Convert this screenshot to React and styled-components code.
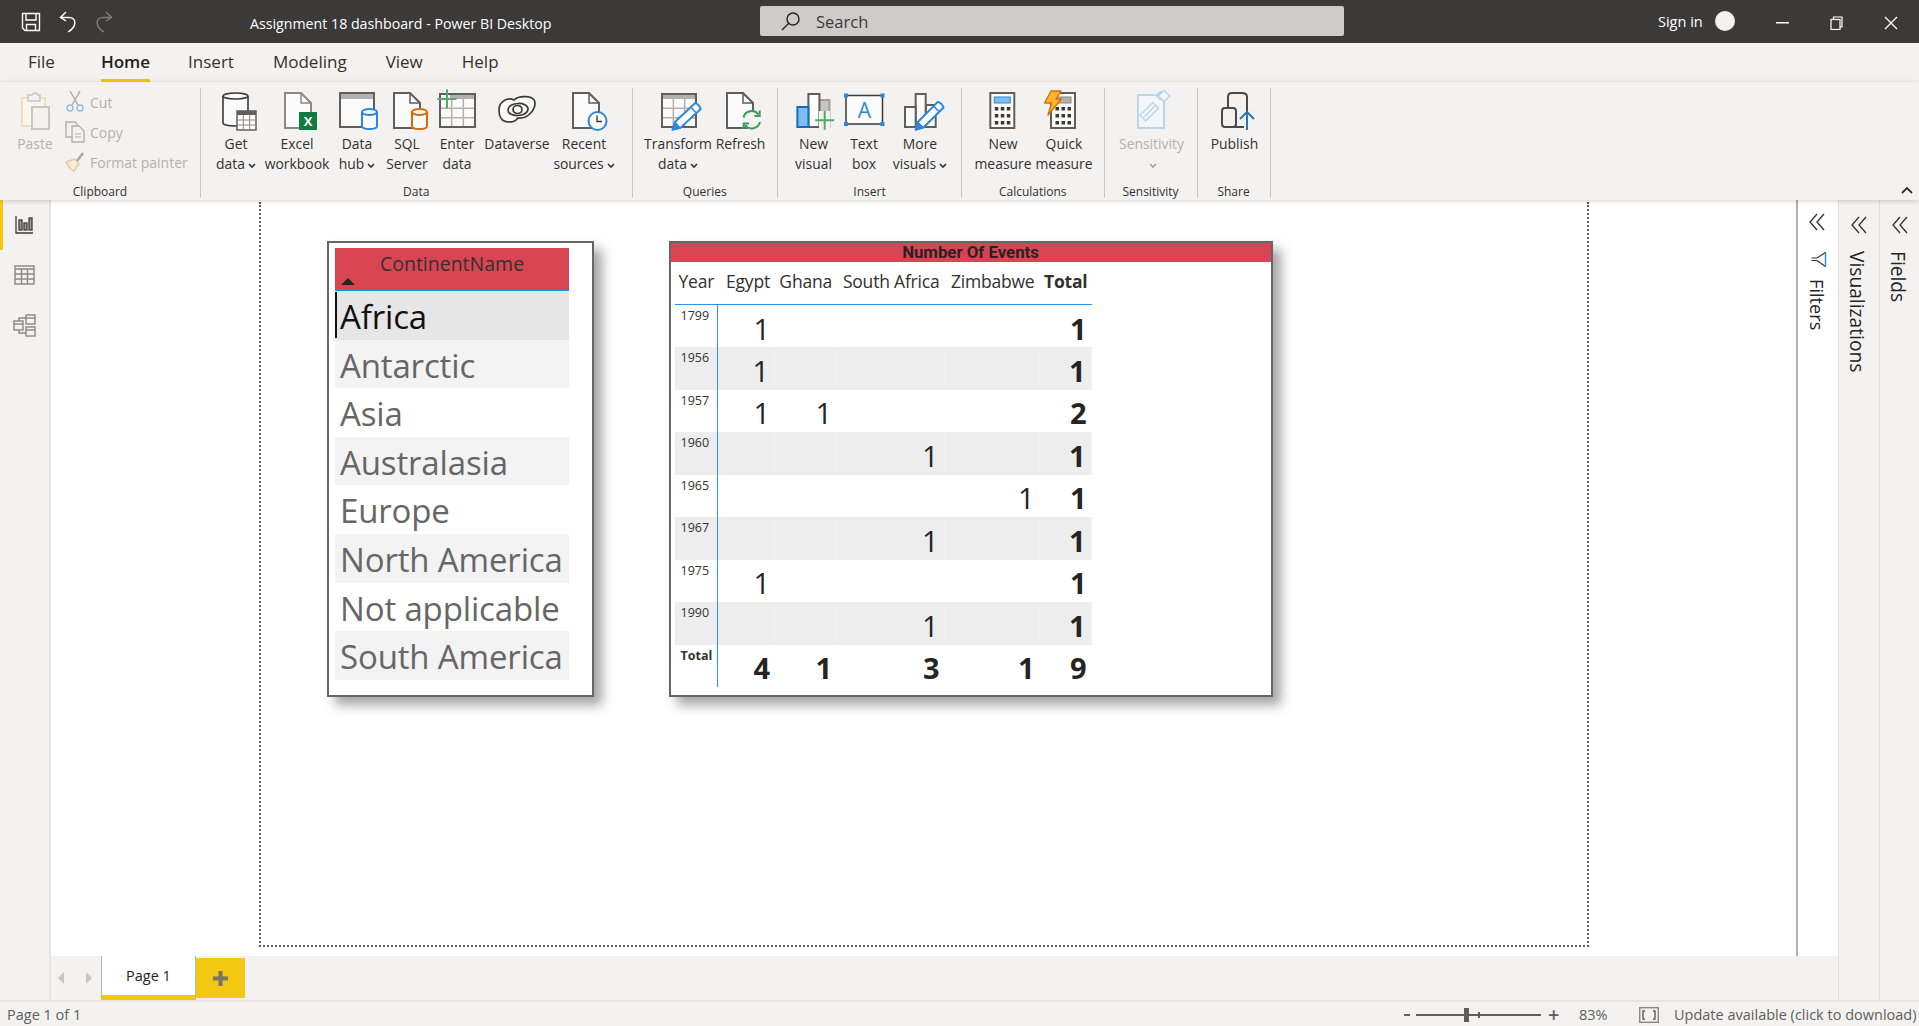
import React from "react";
import styled, { createGlobalStyle } from "styled-components";

const Global = createGlobalStyle`
  html, body { margin: 0; padding: 0; background: #fff; }
  * { box-sizing: border-box; }
  body { font-family: "Open Sans", "Noto Sans", sans-serif; overflow: hidden; }
`;

const Shell = styled.div`
  width: 1919px; height: 1026px; display: flex; flex-direction: column; overflow: hidden; background: #f3f2f1;
`;
const TitleBar = styled.header`
  height: 43px; flex: none; background: #3b3a39; display: flex; align-items: center; color: #fff;
`;
const Qat = styled.div`
  width: 250px; display: flex; align-items: center; gap: 18px; padding-left: 21px;
`;
const TitleText = styled.div`
  width: 510px; font-size: 14.2px; white-space: nowrap; margin-top: 3px;
`;
const SearchBox = styled.div`
  width: 584px; height: 30px; background: #cdccca; border-radius: 2px; display: flex; align-items: center;
  padding-left: 21px; gap: 16px; color: #3b3a39; font-size: 16.5px; margin-top: -1px;
`;
const SignIn = styled.div`
  margin-left: 314px; font-size: 14.5px; white-space: nowrap; margin-top: -1px; width: 57px;
`;
const Avatar = styled.div`
  width: 20px; height: 20px; border-radius: 50%; background: #f3f2f1; margin-top: -1px;
`;
const WinControls = styled.div`
  display: flex; align-items: center; margin-left: 41px; gap: 41px; padding-top: 3px;
`;

const TabBar = styled.nav`
  height: 39px; flex: none; display: flex; padding-left: 28px; color: #252423; font-size: 17px;
`;
const Tab = styled.div`
  margin-right: ${(p) => p.$gap}px; height: 39px; padding-top: 7px; position: relative;
  color: ${(p) => (p.$active ? "#201f1e" : "#323130")}; font-weight: ${(p) => (p.$active ? 600 : 400)};
  border-bottom: ${(p) => (p.$active ? "3px solid #f2c811" : "3px solid transparent")};
`;

const Ribbon = styled.section`
  height: 118px; flex: none; display: flex; padding-top: 6px; position: relative; z-index: 3;
  background: #f3f2f1; box-shadow: 0 1px 5px rgba(0,0,0,.18);
`;
const Group = styled.div`
  width: ${(p) => p.$w}px; height: 110px; flex: none; display: flex; flex-direction: column;
  border-right: 1px solid #c8c6c4;
`;
const GroupItems = styled.div`
  display: flex; padding-left: ${(p) => p.$pad || 0}px; height: 92px;
`;
const GroupLabel = styled.div`
  font-size: 12px; line-height: 12px; text-align: center; color: #323130; margin-top: auto; padding-bottom: 0;
`;
const RibbonButton = styled.div`
  width: ${(p) => p.$w}px; flex: none; display: flex; flex-direction: column; align-items: center; padding-top: 4px;
  color: ${(p) => (p.$dim ? "#b3b0ad" : "#323130")};
`;
const BtnLabel = styled.div`
  font-size: 13.9px; line-height: 20px; margin-top: 2px; text-align: center; white-space: nowrap;
`;
const IconSvg = styled.svg`
  display: block; flex: none; overflow: visible;
`;
const Chevron = styled.svg`
  display: inline-block; width: 8px; height: 6px; margin-left: 3px; vertical-align: 0;
`;
const SmallCol = styled.div`
  display: flex; flex-direction: column; padding-top: 0; margin-left: 3px; margin-top: -1px;
`;
const SmallRow = styled.div`
  height: 30px; display: flex; align-items: center; gap: 5px; color: #b3b0ad; font-size: 14px; white-space: nowrap;
`;
const Collapse = styled.svg`
  position: absolute; right: 6px; top: 104px;
`;

const Main = styled.div`
  flex: 1; display: flex; min-height: 0;
`;
const Rail = styled.aside`
  width: 51px; flex: none; border-right: 2px solid #e6e4e2; display: flex; flex-direction: column;
`;
const RailItem = styled.div`
  height: 50px; display: flex; align-items: center; justify-content: center;
  border-left: 3px solid ${(p) => (p.$active ? "#f2c811" : "transparent")}; padding-right: 3px;
`;
const Center = styled.div`
  width: 1787px; flex: none; display: flex; flex-direction: column;
`;
const CanvasRow = styled.div`
  flex: 1; display: flex; min-height: 0; background: #fff;
`;
const Canvas = styled.div`
  width: 1745px; flex: none; padding: 2px 0 9px 208px;
`;
const ReportPage = styled.div`
  width: 1330px; height: 100%; border: 2px dotted #5f5e5c; border-top: 0; display: flex; align-items: flex-start;
  gap: 74.5px; padding: 39px 0 0 66px;
`;
const Card = styled.div`
  width: ${(p) => p.$w}px; height: 456px; flex: none; background: #fff; border: 2px solid #666;
  box-shadow: 8px 8px 11px rgba(0,0,0,.36);
`;
const SlicerCard = styled(Card)`
  padding: 5px 0 0 6px;
`;
const SlicerHead = styled.div`
  width: 234px; height: 43px; background: #d94452; border-bottom: 1px solid #1e90f0; position: relative;
  text-align: center; font-size: 19.5px; line-height: 31px; color: #323130;
`;
const SortMark = styled.span`
  position: absolute; left: 6px; bottom: 5px; width: 0; height: 0;
  border-left: 7px solid transparent; border-right: 7px solid transparent; border-bottom: 7px solid #252423;
`;
const SlicerRow = styled.div`
  width: 234px; height: 48.6px; padding-left: 5px; font-size: 33px; line-height: 52px; white-space: nowrap;
  letter-spacing: -0.15px; position: relative; color: ${(p) => (p.$sel ? "#111" : "#666")};
  background: ${(p) => (p.$sel ? "#e6e6e6" : p.$alt ? "#f3f3f3" : "#fff")};
  ${(p) => p.$sel && `&::before { content: ""; position: absolute; left: 0; top: 1px; width: 2px; height: 46px; background: #111; }`}
`;
const MatrixTitle = styled.div`
  height: 19px; background: #d94452; text-align: center; font-family: Roboto, sans-serif; font-weight: 700;
  font-size: 16.8px; line-height: 19px; color: #252423;
`;
const Matrix = styled.div`
  display: grid; margin-left: 4px; width: 417px;
  grid-template-columns: 43.5px 57px 62px 107.5px 95px 52px;
  grid-auto-rows: 42.44px; grid-template-rows: 43px;
`;
const HeadCell = styled.div`
  border-bottom: 1.5px solid #2b95ee; display: flex; align-items: center; justify-content: ${(p) => (p.$left ? "flex-start" : "flex-end")};
  font-size: 17.5px; color: #323130; padding: 0 ${(p) => (p.$tot ? 4 : 5)}px 5px 4px; white-space: nowrap; letter-spacing: -.2px;
  font-weight: ${(p) => (p.$tot ? 700 : 400)};
`;
const YearCell = styled.div`
  border-right: 1px solid #2b95ee; padding: 3px 0 0 6px; font-size: 12.5px; line-height: 16px; color: #333;
  font-weight: ${(p) => (p.$tot ? 700 : 400)}; background: ${(p) => (p.$shade ? "#ededed" : "#fff")};
`;
const NumCell = styled.div`
  text-align: right; padding: 2.5px 5px 0 0; font-size: 29px; line-height: 42px; color: #252423;
  font-weight: ${(p) => (p.$bold ? 700 : 400)}; background: ${(p) => (p.$shade ? "#ededed" : "#fff")};
  border-right: ${(p) => (p.$shade ? "1px solid #f1f1f1" : "0")};
`;

const FilterPane = styled.div`
  width: 42px; flex: none; border-left: 2px solid #b3b0ad; background: #fff; display: flex; flex-direction: column;
  align-items: center; padding-top: 13px; padding-right: 3px;
`;
const FunnelIcon = styled.svg`
  margin-top: 20px; margin-left: 3px; flex: none;
`;
const SidePane = styled.div`
  width: ${(p) => p.$w}px; flex: none; border-left: 1px solid #e1dfdd; background: #f3f2f1; display: flex; flex-direction: column;
  align-items: center; padding-top: 16px;
`;
const VertLabel = styled.div`
  writing-mode: vertical-rl; font-size: ${(p) => p.$size}px; font-weight: 500; color: #252423; white-space: nowrap;
  margin-top: ${(p) => p.$top}px; margin-left: ${(p) => p.$ml || 0}px;
`;
const TabStrip = styled.div`
  height: 44px; flex: none; display: flex; background: #f3f2f1;
`;
const PagerArrows = styled.div`
  width: 50px; display: flex; align-items: center; gap: 22px; padding-left: 7px;
`;
const PageTab = styled.div`
  width: 95px; height: 44px; background: #fff; border-left: 1px solid #b3b0ad; border-right: 1px solid #b3b0ad;
  border-bottom: 5px solid #f2c811; text-align: center; font-size: 14.5px; line-height: 40px; font-weight: 400; color: #252423;
`;
const AddTab = styled.div`
  width: 49px; height: 40px; margin-top: 2px; background: #f2c811; display: flex; align-items: center; justify-content: center;
`;
const StatusBar = styled.footer`
  height: 26px; flex: none; border-top: 2px solid #e6e4e2; display: flex; align-items: center; font-size: 14.5px; color: #605e5c;
  padding: 1px 0 0 7px;
`;
const StatusPage = styled.div`
  width: 1397px; white-space: nowrap;
`;
const ZoomMinus = styled.div`
  width: 6px; height: 2px; background: #605e5c; margin-right: 6px;
`;
const ZoomTrack = styled.div`
  width: 125px; height: 2px; background: #605e5c; position: relative;
`;
const ZoomThumb = styled.span`
  position: absolute; top: -6px; left: ${(p) => p.$x}px; width: ${(p) => p.$w}px; height: ${(p) => p.$h}px;
  margin-top: ${(p) => (14 - p.$h) / 2}px; background: #605e5c;
`;
const ZoomPlus = styled.div`
  width: 38px; padding-left: 7px; font-size: 20px; line-height: 20px; font-weight: 600;
`;
const ZoomPct = styled.div`
  width: 60px; font-size: 14.5px;
`;
const FitIcon = styled.svg`
  margin-right: 15px;
`;
const Update = styled.div`
  white-space: nowrap; font-size: 14.5px;
`;

const G = "#605e5c";
const Ico = ({ children }) => (
  <IconSvg width="48" height="40" viewBox="-24 0 48 40" fill="none" stroke={G} strokeWidth="2">{children}</IconSvg>
);
const Page = ({ x0, x1, stroke = G, fill = "#fafafa" }) => (
  <g stroke={stroke}>
    <path d={`M${x0} 1H${x1 - 10}L${x1} 11V36H${x0}Z`} fill={fill} />
    <path d={`M${x1 - 10} 1V11H${x1}`} strokeWidth="1.5" fill="none" />
  </g>
);
const Cyl = ({ x, y, w, h, stroke, fill = "#fafafa", sw = 2 }) => (
  <g stroke={stroke} strokeWidth={sw} fill={fill}>
    <path d={`M${x} ${y + 3}V${y + h - 3}C${x} ${y + h + 1} ${x + w} ${y + h + 1} ${x + w} ${y + h - 3}V${y + 3}`} />
    <ellipse cx={x + w / 2} cy={y + 3} rx={w / 2} ry="3" />
  </g>
);
const GridLines = ({ x, y, w, h, cols, rows, stroke = "#b3b0ad", sw = 1.5 }) => (
  <g stroke={stroke} strokeWidth={sw}>
    {Array.from({ length: cols - 1 }, (_, i) => <path key={i} d={`M${x + (w * (i + 1)) / cols} ${y}v${h}`} />)}
    {Array.from({ length: rows - 1 }, (_, i) => <path key={i} d={`M${x} ${y + (h * (i + 1)) / rows}h${w}`} />)}
  </g>
);
const Pencil = ({ x, y, x2, y2 }) => {
  const a = (Math.atan2(y2 - y, x2 - x) * 180) / Math.PI;
  const len = Math.hypot(x2 - x, y2 - y);
  return (
    <g transform={`translate(${x} ${y}) rotate(${a})`}>
      <path d={`M0 0L7 -4H${len}Q${len + 2} 0 ${len} 4H7Z`} fill="#fff" stroke="#2b88d8" strokeWidth="2" strokeLinejoin="round" />
      <path d="M0 0L7 -4V4Z" fill="#2b88d8" stroke="#2b88d8" strokeWidth="1" />
      <path d={`M${len - 6} -4V4`} stroke="#2b88d8" strokeWidth="1.5" />
    </g>
  );
};
const Plus = ({ cx, cy, r = 9.5, c = "#4cae65" }) => (
  <path d={`M${cx - r} ${cy}h${r * 2}M${cx} ${cy - r}v${r * 2}`} stroke={c} strokeWidth="2" />
);
const CalcBody = ({ x, screen, frame = G }) => {
  const keys = [];
  [0, 1, 2].forEach((r) => [0, 1, 2].forEach((c) => keys.push(<rect key={`${r}${c}`} x={x + 4.5 + c * 6} y={15 + r * 7} width="3.5" height="3.5" fill="#3b3a39" stroke="none" />)));
  return (
    <g>
      <rect x={x} y="1" width="24" height="35" fill="#fafafa" stroke={frame} strokeWidth="2" />
      <rect x={x + 4} y="5" width="16" height="6" fill={screen} stroke={screen === "#b3b0ad" ? "#8a8886" : "#2b88d8"} strokeWidth="1" />
      {keys}
    </g>
  );
};

const icons = {
  paste: (
    <Ico>
      <rect x="-13" y="6" width="23" height="28" fill="#faf6ef" stroke="#f3dcb8" strokeWidth="2" />
      <path d="M-7 6V3H-3Q0 -1 3 3H5V9H-7Z" fill="#f3f2f1" stroke="#c8c6c4" strokeWidth="1.5" />
      <rect x="-3" y="15" width="17" height="22" fill="#f3f2f1" stroke="#c8c6c4" strokeWidth="2" />
    </Ico>
  ),
  getData: (
    <Ico>
      <Cyl x={-13} y={1} w={25} h={33} stroke="#3b3a39" sw={1.6} />
      <rect x="1" y="19" width="19" height="19" fill="#fff" stroke={G} strokeWidth="1.5" />
      <rect x="1" y="19" width="19" height="4" fill={G} stroke="none" />
      <GridLines x={1} y={23} w={19} h={15} cols={3} rows={3} stroke="#8a8886" sw={1} />
    </Ico>
  ),
  excel: (
    <Ico>
      <Page x0={-12} x1={14} stroke="#8a8886" />
      <rect x="2" y="20" width="18" height="18" fill="#107c41" stroke="none" />
      <text x="11" y="34" fontFamily="Open Sans, sans-serif" fontWeight="700" fontSize="13" fill="#fff" stroke="none" textAnchor="middle">X</text>
    </Ico>
  ),
  hub: (
    <Ico>
      <rect x="-17" y="1" width="34" height="34" fill="#fafafa" />
      <rect x="-17" y="1" width="34" height="6" fill="#b3b0ad" stroke="none" />
      <rect x="-17" y="1" width="34" height="34" fill="none" />
      <Cyl x={5} y={17} w={15} h={20} stroke="#2b88d8" />
    </Ico>
  ),
  sql: (
    <Ico>
      <Page x0={-13} x1={13} />
      <Cyl x={5} y={17} w={15} h={20} stroke="#d86c00" />
    </Ico>
  ),
  enter: (
    <Ico>
      <rect x="-17" y="2" width="35" height="33" fill="#fafafa" />
      <rect x="-7" y="3" width="25" height="4" fill="#b3b0ad" stroke="none" />
      <GridLines x={-17} y={7} w={35} h={28} cols={3} rows={3} />
      <rect x="-17" y="2" width="35" height="33" fill="none" stroke={G} />
      <Plus cx={-10} cy={7} />
    </Ico>
  ),
  dataverse: (
    <Ico>
      <g stroke="#3b3a39" strokeWidth="1.7">
        <path d="M-9 30C-15 30 -18 25 -18 18C-18 9 -9 5 -3 8C2 3 18 3 18 11C18 18 11 27 1 26C-2 30 -5 30 -9 30Z" fill="#fafafa" />
        <path d="M-9 18C-9 10 11 9 11 17C11 25 -9 26 -9 18Z" />
        <ellipse cx="0.5" cy="17.5" rx="4.5" ry="4" />
      </g>
    </Ico>
  ),
  recent: (
    <Ico>
      <Page x0={-11} x1={15} />
      <circle cx="13.5" cy="29" r="9" fill="#fff" stroke="#2b88d8" />
      <path d="M13 23.5V29.5H18" stroke="#3b3a39" strokeWidth="1.4" />
    </Ico>
  ),
  transform: (
    <Ico>
      <rect x="-16" y="2" width="34" height="33" fill="#fafafa" />
      <rect x="-16" y="3" width="34" height="4" fill="#b3b0ad" stroke="none" />
      <GridLines x={-16} y={7} w={34} h={28} cols={3} rows={3} />
      <rect x="-16" y="2" width="34" height="33" fill="none" stroke={G} />
      <Pencil x={-5.5} y={37.7} x2={20} y2={14} />
    </Ico>
  ),
  refresh: (
    <Ico>
      <Page x0={-14} x1={12} />
      <circle cx="10.7" cy="27.7" r="9.5" fill="#f3f2f1" stroke="none" />
      <g stroke="#3a9a5b" strokeWidth="2">
        <path d="M2.5 25.5A8.5 8.5 0 0 1 17.5 22.5" />
        <path d="M19 30A8.5 8.5 0 0 1 4 33" />
        <path d="M18.7 18.5V24H13.5" />
        <path d="M2.7 37V31.5H8" />
      </g>
    </Ico>
  ),
  newVisual: (
    <Ico>
      <rect x="4.4" y="8" width="11" height="27" fill="#c8c6c4" stroke="#a19f9d" />
      <rect x="-5.6" y="2" width="11" height="33" fill="#fff" stroke={G} />
      <rect x="-16.6" y="15" width="11" height="20" fill="#83bcee" stroke="#106ebe" />
      <rect x="5" y="19" width="11" height="17" fill="#f3f2f1" stroke="none" />
      <Plus cx={10.7} cy={28.3} />
    </Ico>
  ),
  textBox: (
    <Ico>
      <rect x="-18" y="3.5" width="36.5" height="28.5" fill="#fbfbfb" stroke="#3b3a39" strokeWidth="1.5" />
      {[[-18, 3.5], [18.5, 3.5], [-18, 32], [18.5, 32]].map(([x, y]) => (
        <rect key={`${x}${y}`} x={x - 2} y={y - 2} width="4" height="4" fill="#2b88d8" stroke="none" />
      ))}
      <text x="0.5" y="26" fontFamily="Open Sans, sans-serif" fontSize="21" fill="#2b88d8" stroke="none" textAnchor="middle">A</text>
    </Ico>
  ),
  moreVisuals: (
    <Ico>
      <rect x="5.7" y="13" width="10" height="22" fill="#fafafa" />
      <rect x="-4.3" y="2" width="10" height="33" fill="#fafafa" />
      <rect x="-15" y="15" width="10.7" height="20" fill="#fafafa" />
      <Pencil x={-4.3} y={37.7} x2={20.7} y2={12.7} />
    </Ico>
  ),
  newMeasure: (
    <Ico><CalcBody x={-12.7} screen="#83bcee" /></Ico>
  ),
  quick: (
    <Ico>
      <CalcBody x={-13} screen="#b3b0ad" />
      <path d="M-13 -1H-3L-8 7H-2.5L-16 23L-12.5 11H-19.5Z" fill="#fbb42c" stroke="#d86c00" strokeWidth="1.3" strokeLinejoin="round" />
    </Ico>
  ),
  sensitivity: (
    <Ico>
      <rect x="-14" y="3" width="26" height="33" fill="#f3f7fa" stroke="#b9d6e8" />
      <g transform="rotate(-45 -2 19)" stroke="#b9d6e8" strokeWidth="1.5">
        <rect x="-12" y="15" width="18" height="8" fill="#f3f7fa" />
        <path d="M-10 19H5" />
      </g>
      <path d="M2 3L9 -2L14 3L9 9" fill="#b9d6e8" stroke="#f3f2f1" strokeWidth="1" />
      <rect x="8" y="0" width="8" height="8" transform="rotate(45 12 4)" fill="#f3f7fa" stroke="#b9d6e8" strokeWidth="1.5" />
    </Ico>
  ),
  publish: (
    <Ico>
      <path d="M-7 16V5Q-7 1 -3 1H7Q12 1 12 5V35" stroke="#4a4948" fill="none" />
      <rect x="-13" y="16" width="14" height="19" rx="3" stroke="#4a4948" fill="none" />
      <path d="M-1 35H9" stroke="#4a4948" />
      <path d="M12 38V20M5 27L12 20L19 27" stroke="#2a7ab0" strokeWidth="2" />
    </Ico>
  ),
};

const Caret = ({ dim }) => (
  <Chevron viewBox="0 0 8 6" fill="none" stroke={dim ? "#a19f9d" : "#323130"} strokeWidth="1.6"><path d="M1 1l3 3 3-3" /></Chevron>
);

const RBtn = ({ w, icon, l1, l2, caret, dim }) => (
  <RibbonButton $w={w} $dim={dim}>
    {icons[icon]}
    <BtnLabel>
      {l1}
      <br />
      {l2}
      {caret && <Caret dim={dim} />}
    </BtnLabel>
  </RibbonButton>
);

const groups = [
  { w: 145.5, pad: 7, label: "Queries", items: [["transform", 77, "Transform", "data", true], ["refresh", 48, "Refresh", ""]] },
  { w: 184, pad: 12, label: "Insert", items: [["newVisual", 47, "New", "visual"], ["textBox", 54, "Text", "box"], ["moreVisuals", 58, "More", "visuals", true]] },
  { w: 142.5, pad: 12, label: "Calculations", items: [["newMeasure", 58, "New", "measure"], ["quick", 64, "Quick", "measure"]] },
  { w: 93, pad: 1, label: "Sensitivity", items: [["sensitivity", 92, "Sensitivity", "", true, true]] },
  { w: 73, pad: 1, label: "Share", items: [["publish", 72, "Publish", ""]] },
];

const continents = ["Africa", "Antarctic", "Asia", "Australasia", "Europe", "North America", "Not applicable", "South America"];
const matrixRows = [
  ["1799", 1, null, null, null, 1],
  ["1956", 1, null, null, null, 1],
  ["1957", 1, 1, null, null, 2],
  ["1960", null, null, 1, null, 1],
  ["1965", null, null, null, 1, 1],
  ["1967", null, null, 1, null, 1],
  ["1975", 1, null, null, null, 1],
  ["1990", null, null, 1, null, 1],
];
const heads = ["Egypt", "Ghana", "South Africa", "Zimbabwe"];

const DoubleChevron = () => (
  <svg width="16" height="18" viewBox="0 0 16 18" fill="none" stroke="#323130" strokeWidth="1.3"><path d="M8 1L1 9l7 8M15 1L8 9l7 8" /></svg>
);

export default function App() {
  return (
    <Shell>
      <Global />
      <TitleBar>
        <Qat>
          <svg width="20" height="20" viewBox="0 0 20 20" fill="none" stroke="#fff" strokeWidth="1.4">
            <path d="M1.5 1.5H18.5V18.5H4L1.5 16Z" /><path d="M5 1.5V8H15V1.5" /><path d="M5.5 18.5V12.5H14.5V18.5" />
          </svg>
          <svg width="18" height="22" viewBox="0 0 18 22" fill="none" stroke="#fff" strokeWidth="1.4">
            <path d="M7 1L1.5 6.5L7 10" /><path d="M1.5 6.5H10C18 6.5 18 16 9 21" />
          </svg>
          <svg width="18" height="22" viewBox="0 0 18 22" fill="none" stroke="#7d7c7b" strokeWidth="1.4">
            <path d="M11 1L16.5 6.5L11 10" /><path d="M16.5 6.5H8C0 6.5 0 16 9 21" />
          </svg>
        </Qat>
        <TitleText>Assignment 18 dashboard - Power BI Desktop</TitleText>
        <SearchBox>
          <svg width="19" height="19" viewBox="0 0 19 19" fill="none" stroke="#252423" strokeWidth="1.4">
            <circle cx="12" cy="7" r="6" /><path d="M7.5 11.5L1 18" />
          </svg>
          Search
        </SearchBox>
        <SignIn>Sign in</SignIn>
        <Avatar />
        <WinControls>
          <svg width="13" height="2" viewBox="0 0 13 2"><rect width="13" height="1.5" fill="#fff" /></svg>
          <svg width="13" height="14" viewBox="0 0 13 14" fill="none" stroke="#fff" strokeWidth="1.2">
            <rect x="1" y="3.5" width="9" height="10" /><path d="M3.5 3.5V1H12V11H10" />
          </svg>
          <svg width="14" height="14" viewBox="0 0 14 14" fill="none" stroke="#fff" strokeWidth="1.3"><path d="M1 1l12 12M13 1L1 13" /></svg>
        </WinControls>
      </TitleBar>

      <TabBar>
        <Tab $gap={46}>File</Tab>
        <Tab $gap={38} $active>Home</Tab>
        <Tab $gap={39}>Insert</Tab>
        <Tab $gap={39}>Modeling</Tab>
        <Tab $gap={39}>View</Tab>
        <Tab $gap={0}>Help</Tab>
      </TabBar>

      <Ribbon>
        <Group $w={201}>
          <GroupItems $pad={8}>
            <RBtn w={54} icon="paste" l1="Paste" l2="" dim />
            <SmallCol>
              <SmallRow>
                <svg width="20" height="24" viewBox="0 0 20 24" fill="none" stroke="#a9a8a6" strokeWidth="1.4">
                  <path d="M5 1L13 15M15 1L7 15" />
                  <circle cx="5" cy="18" r="3" stroke="#8fbde0" /><circle cx="15" cy="18" r="3" stroke="#8fbde0" />
                </svg>
                Cut
              </SmallRow>
              <SmallRow>
                <svg width="20" height="22" viewBox="0 0 20 22" fill="none" stroke="#b3b0ad" strokeWidth="1.4">
                  <path d="M7 16H1V1H10L12 3V5" /><path d="M7 5H14L19 10V21H7Z" fill="#f3f2f1" /><path d="M10 13H16M10 16H16" strokeWidth="1" />
                </svg>
                Copy
              </SmallRow>
              <SmallRow>
                <svg width="20" height="20" viewBox="0 0 20 20" fill="none" stroke="#e9c9a5" strokeWidth="1.5">
                  <path d="M1 10L10 7L14 12L9 19C6 18 3 14 1 10Z" fill="#f8ead9" /><path d="M12 9L18 1" stroke="#a9a8a6" strokeWidth="2.5" />
                </svg>
                Format painter
              </SmallRow>
            </SmallCol>
          </GroupItems>
          <GroupLabel>Clipboard</GroupLabel>
        </Group>
        <Group $w={431.5}>
          <GroupItems $pad={9}>
            <RBtn w={52} icon="getData" l1="Get" l2="data" caret />
            <RBtn w={70} icon="excel" l1="Excel" l2="workbook" />
            <RBtn w={50} icon="hub" l1="Data" l2="hub" caret />
            <RBtn w={50} icon="sql" l1="SQL" l2="Server" />
            <RBtn w={50} icon="enter" l1="Enter" l2="data" />
            <RBtn w={70} icon="dataverse" l1="Dataverse" l2="" />
            <RBtn w={64} icon="recent" l1="Recent" l2="sources" caret />
          </GroupItems>
          <GroupLabel>Data</GroupLabel>
        </Group>
        {groups.map((g) => (
          <Group key={g.label} $w={g.w}>
            <GroupItems $pad={g.pad}>
              {g.items.map(([icon, w, l1, l2, caret, dim]) => (
                <RBtn key={icon} icon={icon} w={w} l1={l1} l2={l2} caret={caret} dim={dim} />
              ))}
            </GroupItems>
            <GroupLabel>{g.label}</GroupLabel>
          </Group>
        ))}
        <Collapse width="12" height="8" viewBox="0 0 12 8" fill="none" stroke="#323130" strokeWidth="1.8"><path d="M1 7l5-5 5 5" /></Collapse>
      </Ribbon>

      <Main>
        <Rail>
          <RailItem $active>
            <svg width="19" height="18" viewBox="0 0 19 18" fill="none" stroke="#3b3a39" strokeWidth="1.3">
              <path d="M1 0V17H18" />
              <rect x="4" y="4" width="3" height="10" fill="#a19f9d" /><rect x="9" y="7" width="3" height="7" fill="#a19f9d" /><rect x="14" y="2" width="3" height="12" fill="#a19f9d" />
            </svg>
          </RailItem>
          <RailItem>
            <svg width="21" height="20" viewBox="0 0 21 20" fill="none" stroke="#8a8886" strokeWidth="1.4">
              <rect x="1" y="1" width="19" height="18" /><path d="M1 4H20M1 9H20M1 14H20M7.5 4V19M13.5 4V19" />
            </svg>
          </RailItem>
          <RailItem>
            <svg width="23" height="23" viewBox="0 0 23 23" fill="none" stroke="#8a8886" strokeWidth="1.4">
              <rect x="1" y="7" width="9" height="9" fill="#f3f2f1" /><path d="M1 10H10" />
              <rect x="13" y="1" width="9" height="9" fill="#f3f2f1" /><path d="M13 4H22" />
              <rect x="13" y="13" width="9" height="9" fill="#f3f2f1" /><path d="M13 16H22" />
              <path d="M6 7V4H13M6 16V19H13" />
            </svg>
          </RailItem>
        </Rail>
        <Center>
          <CanvasRow>
            <Canvas>
              <ReportPage>
                <SlicerCard $w={267}>
                  <SlicerHead>ContinentName<SortMark /></SlicerHead>
                  {continents.map((c, i) => (
                    <SlicerRow key={c} $sel={i === 0} $alt={i % 2 === 1}>{c}</SlicerRow>
                  ))}
                </SlicerCard>
                <Card $w={604}>
                  <MatrixTitle>Number Of Events</MatrixTitle>
                  <Matrix>
                    <HeadCell $left>Year</HeadCell>
                    {heads.map((h) => <HeadCell key={h}>{h}</HeadCell>)}
                    <HeadCell $tot>Total</HeadCell>
                    {matrixRows.map((r, i) => {
                      const shade = i % 2 === 1;
                      return (
                        <React.Fragment key={r[0]}>
                          <YearCell $shade={shade}>{r[0]}</YearCell>
                          {r.slice(1).map((v, j) => (
                            <NumCell key={j} $shade={shade} $bold={j === 4}>{v}</NumCell>
                          ))}
                        </React.Fragment>
                      );
                    })}
                    <YearCell $tot>Total</YearCell>
                    {[4, 1, 3, 1, 9].map((v, j) => (
                      <NumCell key={j} $bold>{v}</NumCell>
                    ))}
                  </Matrix>
                </Card>
              </ReportPage>
            </Canvas>
            <FilterPane>
              <DoubleChevron />
              <FunnelIcon width="17" height="17" viewBox="0 0 17 17" fill="none" stroke="#323130" strokeWidth="1.2">
                <path d="M15.5 1.5L7 7H1.5M15.5 15.5L7 9.5H1.5" />
                <path d="M15.5 1V16" stroke="#2b88d8" strokeWidth="1.4" />
              </FunnelIcon>
              <VertLabel $top={11} $size={18.2}>Filters</VertLabel>
            </FilterPane>
          </CanvasRow>
          <TabStrip>
            <PagerArrows>
              <svg width="6" height="12" viewBox="0 0 6 12"><path d="M6 0V12L0 6Z" fill="#c8c6c4" /></svg>
              <svg width="6" height="12" viewBox="0 0 6 12"><path d="M0 0V12L6 6Z" fill="#c8c6c4" /></svg>
            </PagerArrows>
            <PageTab>Page 1</PageTab>
            <AddTab>
              <svg width="15" height="15" viewBox="0 0 15 15"><path d="M0 5.5H5.5V0H9.5V5.5H15V9.5H9.5V15H5.5V9.5H0Z" fill="#7a7468" /></svg>
            </AddTab>
          </TabStrip>
        </Center>
        <SidePane $w={41}>
          <DoubleChevron />
          <VertLabel $top={17} $ml={-3} $size={19.2}>Visualizations</VertLabel>
        </SidePane>
        <SidePane $w={40}>
          <DoubleChevron />
          <VertLabel $top={17} $ml={-3} $size={19.2}>Fields</VertLabel>
        </SidePane>
      </Main>

      <StatusBar>
        <StatusPage>Page 1 of 1</StatusPage>
        <ZoomMinus />
        <ZoomTrack>
          <ZoomThumb $x={48} $w={5} $h={14} />
          <ZoomThumb $x={62} $w={2} $h={6} />
        </ZoomTrack>
        <ZoomPlus>+</ZoomPlus>
        <ZoomPct>83%</ZoomPct>
        <FitIcon width="20" height="16" viewBox="0 0 20 16" fill="none" stroke="#8a8886" strokeWidth="1.4">
          <rect x=".7" y=".7" width="18.6" height="14.6" /><path d="M6 4H4V12H6M14 4H16V12H14" stroke="#605e5c" />
        </FitIcon>
        <Update>Update available (click to download)</Update>
      </StatusBar>
    </Shell>
  );
}
